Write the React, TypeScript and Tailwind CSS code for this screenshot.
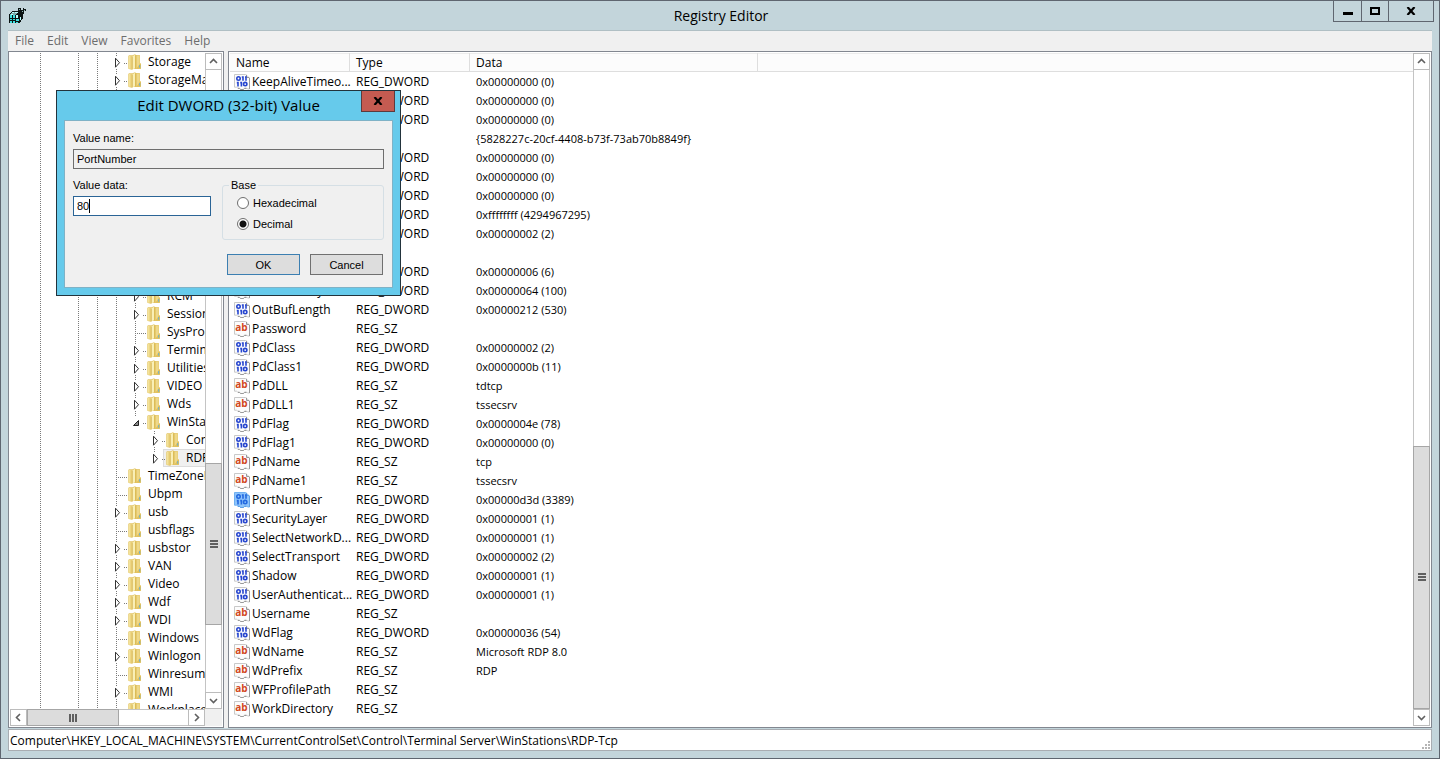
import React from 'react'

interface TreeNode {
  label: string
  depth: number
  state?: 'closed' | 'open'
  last?: boolean
  selected?: boolean
}

interface RegValue {
  name: string
  type: 'REG_DWORD' | 'REG_SZ'
  data: string
  selected?: boolean
}

const treeNodes: TreeNode[] = [
  { label: 'Storage', depth: 0, state: 'closed' },
  { label: 'StorageManagement', depth: 0, state: 'closed' },
  { label: '', depth: 0 },
  { label: '', depth: 0 },
  { label: '', depth: 0 },
  { label: '', depth: 0 },
  { label: '', depth: 0 },
  { label: '', depth: 0 },
  { label: '', depth: 0 },
  { label: '', depth: 0 },
  { label: '', depth: 1 },
  { label: '', depth: 1 },
  { label: '', depth: 1 },
  { label: 'RCM', depth: 1, state: 'closed' },
  { label: 'SessionArbitrationHelper', depth: 1, state: 'closed' },
  { label: 'SysProcs', depth: 1 },
  { label: 'TerminalTypes', depth: 1, state: 'closed' },
  { label: 'Utilities', depth: 1, state: 'closed' },
  { label: 'VIDEO', depth: 1, state: 'closed' },
  { label: 'Wds', depth: 1, state: 'closed' },
  { label: 'WinStations', depth: 1, state: 'open', last: true },
  { label: 'Console', depth: 2, state: 'closed' },
  { label: 'RDP-Tcp', depth: 2, state: 'closed', last: true, selected: true },
  { label: 'TimeZoneInformation', depth: 0 },
  { label: 'Ubpm', depth: 0 },
  { label: 'usb', depth: 0, state: 'closed' },
  { label: 'usbflags', depth: 0 },
  { label: 'usbstor', depth: 0, state: 'closed' },
  { label: 'VAN', depth: 0, state: 'closed' },
  { label: 'Video', depth: 0, state: 'closed' },
  { label: 'Wdf', depth: 0, state: 'closed' },
  { label: 'WDI', depth: 0, state: 'closed' },
  { label: 'Windows', depth: 0 },
  { label: 'Winlogon', depth: 0, state: 'closed' },
  { label: 'Winresume', depth: 0 },
  { label: 'WMI', depth: 0, state: 'closed' },
  { label: 'WorkplaceJoin', depth: 0 },
]

const values: RegValue[] = [
  { name: 'KeepAliveTimeo...', type: 'REG_DWORD', data: '0x00000000 (0)' },
  { name: 'KeyboardLayout', type: 'REG_DWORD', data: '0x00000000 (0)' },
  { name: 'LanAdapter', type: 'REG_DWORD', data: '0x00000000 (0)' },
  { name: 'LoadableProtoc...', type: 'REG_SZ', data: '{5828227c-20cf-4408-b73f-73ab70b8849f}' },
  { name: 'MaxConnection...', type: 'REG_DWORD', data: '0x00000000 (0)' },
  { name: 'MaxDisconnecti...', type: 'REG_DWORD', data: '0x00000000 (0)' },
  { name: 'MaxIdleTime', type: 'REG_DWORD', data: '0x00000000 (0)' },
  { name: 'MaxInstanceCo...', type: 'REG_DWORD', data: '0xffffffff (4294967295)' },
  { name: 'MinEncryptionL...', type: 'REG_DWORD', data: '0x00000002 (2)' },
  { name: 'NWLogonServer', type: 'REG_SZ', data: '' },
  { name: 'OutBufCount', type: 'REG_DWORD', data: '0x00000006 (6)' },
  { name: 'OutBufDelay', type: 'REG_DWORD', data: '0x00000064 (100)' },
  { name: 'OutBufLength', type: 'REG_DWORD', data: '0x00000212 (530)' },
  { name: 'Password', type: 'REG_SZ', data: '' },
  { name: 'PdClass', type: 'REG_DWORD', data: '0x00000002 (2)' },
  { name: 'PdClass1', type: 'REG_DWORD', data: '0x0000000b (11)' },
  { name: 'PdDLL', type: 'REG_SZ', data: 'tdtcp' },
  { name: 'PdDLL1', type: 'REG_SZ', data: 'tssecsrv' },
  { name: 'PdFlag', type: 'REG_DWORD', data: '0x0000004e (78)' },
  { name: 'PdFlag1', type: 'REG_DWORD', data: '0x00000000 (0)' },
  { name: 'PdName', type: 'REG_SZ', data: 'tcp' },
  { name: 'PdName1', type: 'REG_SZ', data: 'tssecsrv' },
  { name: 'PortNumber', type: 'REG_DWORD', data: '0x00000d3d (3389)', selected: true },
  { name: 'SecurityLayer', type: 'REG_DWORD', data: '0x00000001 (1)' },
  { name: 'SelectNetworkD...', type: 'REG_DWORD', data: '0x00000001 (1)' },
  { name: 'SelectTransport', type: 'REG_DWORD', data: '0x00000002 (2)' },
  { name: 'Shadow', type: 'REG_DWORD', data: '0x00000001 (1)' },
  { name: 'UserAuthenticat...', type: 'REG_DWORD', data: '0x00000001 (1)' },
  { name: 'Username', type: 'REG_SZ', data: '' },
  { name: 'WdFlag', type: 'REG_DWORD', data: '0x00000036 (54)' },
  { name: 'WdName', type: 'REG_SZ', data: 'Microsoft RDP 8.0' },
  { name: 'WdPrefix', type: 'REG_SZ', data: 'RDP' },
  { name: 'WFProfilePath', type: 'REG_SZ', data: '' },
  { name: 'WorkDirectory', type: 'REG_SZ', data: '' },
]

const AppIcon = () => (
  <svg width="18" height="18" viewBox="0 0 17 17" shapeRendering="crispEdges">
    <path d="M1 7 4 4h6l1-1 3 2v6l-3 4H1z" fill="#0b1414" />
    <path d="M1 8 4 5h5L7 8z" fill="#7fa9a9" />
    <path d="M2 8h2v2H2zM5 8h2v2H5zM2 11h2v1H2zM5 11h2v1H5zM2 13h2v2H2zM5 13h2v2H5zM8 11h2v2H8zM8 14h1v1H8z" fill="#3fe0e0" />
    <path d="M4 5h2v1H4zM7 5h2v1H7zM3 7h2v1H3zM8 8h1v2H8zM11 9h1v3h-1z" fill="#bff" />
    <path d="M9 1h3v3H9zM12 3h3v3h-3zM14 1h1v2h-1zM15 2h2v2h-2zM13 6h2v1h-2z" fill="#0b1414" />
    <path d="M10 2h1v1h-1zM13 4h1v1h-1zM15 3h1v1h-1z" fill="#8fb5b5" />
  </svg>
)

const FolderIcon = () => (
  <svg width="14" height="16" viewBox="0 0 14 16" className="shrink-0">
    <path d="M.3 2 1 1.3h3.5L7 .3l1 .8h3.6l.4.6V9l1 .8v4.6l-.6.6H5l-1 .7L.8 15l-.5-.6z" fill="#e3c567" />
    <path d="M.8 2h3.4v12.7H.8z" fill="#f3e29a" />
    <path d="M2.4 2h1.8v13H2.4z" fill="#ead078" />
    <path d="M4.2 2.6 7 .8v13.4l-2.8 1.2z" fill="#f9efb6" />
    <path d="M4.3 2.6v12.6" stroke="#cfae4b" strokeWidth=".7" />
    <path d="M7 1.4h1.6v13.2H7z" fill="#dcbc56" />
    <path d="M8.6 1.6h3v9.6l-3 3.2z" fill="#eed88a" />
    <path d="M8.6 14.6 12 9.4l1 .8v4.2z" fill="#e2c15a" />
    <path d="M11.2 11h1v2.8h-1z" fill="#6ab0d4" />
  </svg>
)

const ValueIcon = ({ type, selected }: { type: RegValue['type']; selected?: boolean }) => (
  <svg width="16" height="16" viewBox="0 0 16 16" className="shrink-0">
    <path
      d="M.5.5h11l4 3.5v11h-2l-1-1h-2l-1 1.5h-3l-1-1.5h-2l-1-.8H.5z"
      fill={selected ? '#8ec4fb' : '#fcfcfc'}
      stroke={selected ? '#6fb0f0' : '#c9c9c9'}
    />
    <path d="M12.5.8v2.7h2.8M15.5 4v11M4 14.5h1.5l1 1h3l1-1h2" fill="none" stroke={selected ? '#5e9fe4' : '#9a9a9a'} />
    {type === 'REG_DWORD' ? (
      <g fill="none" stroke={selected ? '#2268e0' : '#2746cf'} strokeWidth="1.6">
        <circle cx="4.5" cy="4.5" r="1.7" />
        <path d="M9 2.2v4.6M12 2.2v4.6M4 7.8v4.6M7.4 7.8v4.6M7.8 3H9M11 3h1M2.8 8.6H4M6.2 8.6h1.2" />
        <circle cx="11.2" cy="10.1" r="1.7" />
      </g>
    ) : (
      <text x="7.5" y="10" textAnchor="middle" fontFamily="Open Sans" fontSize="10" fontWeight="700" fill="#d2481f">
        ab
      </text>
    )}
  </svg>
)

const Chevron = ({ dir }: { dir: 'up' | 'down' | 'left' | 'right' }) => {
  const paths = {
    up: 'M1 6 4.5 2.5 8 6',
    down: 'M1 3l3.5 3.5L8 3',
    left: 'M6 1 2.5 4.5 6 8',
    right: 'M3 1l3.5 3.5L3 8',
  }
  return (
    <svg width="9" height="9" viewBox="0 0 9 9">
      <path d={paths[dir]} fill="none" stroke="#606060" strokeWidth="1.6" />
    </svg>
  )
}

const ScrollButton = ({ dir }: { dir: 'up' | 'down' | 'left' | 'right' }) => (
  <button
    aria-label={`Scroll ${dir}`}
    className="flex h-[17px] w-[17px] shrink-0 items-center justify-center border border-[#bcbcbc] bg-white"
  >
    <Chevron dir={dir} />
  </button>
)

const Grip = ({ vertical }: { vertical?: boolean }) => (
  <svg width="8" height="8" viewBox="0 0 8 8" className="shrink-0" shapeRendering="crispEdges">
    <path d={vertical ? 'M0 0h8v2H0zM0 3h8v2H0zM0 6h8v2H0z' : 'M0 0h2v8H0zM3 0h2v8H3zM6 0h2v8H6z'} fill="#606060" />
  </svg>
)

const TreeRow = ({ node }: { node: TreeNode }) => {
  // a false entry is a level whose branch already ended
  const guides = [true, false, true, true, true, false].slice(0, 4 + node.depth)
  const dotsY = 'bg-[linear-gradient(#7a7a7a_50%,transparent_50%)] bg-[length:1px_2px]'
  const dotsX = 'bg-[linear-gradient(90deg,#7a7a7a_50%,transparent_50%)] bg-[length:2px_1px]'
  return (
    <li className="flex h-[18px] shrink-0">
      {guides.map((on, i) => (
        <span key={i} className="flex w-[19px] shrink-0 justify-center">
          {on && <span className={`w-px ${dotsY}`} />}
        </span>
      ))}
      <span className="relative w-[18px] shrink-0">
        <span className={`absolute left-[9px] top-0 w-px ${node.last ? 'h-[10px]' : 'h-full'} ${dotsY}`} />
        {node.label && <span className={`absolute -right-[3px] left-[9px] top-[10px] h-px ${dotsX}`} />}
        {node.state && (
          <span className="absolute left-[6px] top-[3px] flex h-[13px] w-[11px] items-center bg-white">
            <svg width="8" height="11" viewBox="0 0 8 11">
              {node.state === 'closed' ? (
                <path d="M2.5 1.2v9L6.5 5.7z" fill="#fff" stroke="#333" />
              ) : (
                <path d="M6.5 3.5v5h-5z" fill="#8a8a8a" stroke="#222" />
              )}
            </svg>
          </span>
        )}
      </span>
      <span
        className={`flex grow items-center gap-[6px] whitespace-nowrap pl-[3px] ${
          node.selected ? 'bg-[#f0f0f0] ring-1 ring-inset ring-[#dcdcdc]' : ''
        }`}
      >
        {node.label && <FolderIcon />}
        {node.label}
      </span>
    </li>
  )
}

const KeyTree = () => (
  <div className="flex w-[216px] shrink-0 flex-col border border-[#828790] bg-white p-px">
    <div className="flex min-h-0 grow basis-0">
      <ul className="flex min-w-0 grow basis-0 flex-col overflow-hidden pl-[21px]">
        {treeNodes.map((node, i) => (
          <TreeRow key={i} node={node} />
        ))}
      </ul>
      <div className="flex w-[17px] shrink-0 flex-col border-x border-[#c4c4c4] bg-white">
        <div className="-mx-px flex grow flex-col">
          <ScrollButton dir="up" />
          <div className="grow-[394] basis-0" />
          <div className="flex grow-[161] basis-0 items-center justify-center border border-[#a6a6a6] bg-[#dcdcdc]">
            <Grip vertical />
          </div>
          <div className="grow-[67] basis-0" />
          <ScrollButton dir="down" />
        </div>
      </div>
    </div>
    <div className="flex h-[17px] shrink-0 bg-[#f0f0f0] pr-[17px]">
      <div className="flex grow border-y border-[#c4c4c4] bg-white">
        <div className="-my-px flex grow">
          <ScrollButton dir="left" />
          <div className="flex grow-[91] basis-0 items-center justify-center border border-[#a6a6a6] bg-[#dcdcdc]">
            <Grip />
          </div>
          <div className="grow-[70] basis-0" />
          <ScrollButton dir="right" />
        </div>
      </div>
    </div>
  </div>
)

const ValueList = () => (
  <div className="flex min-w-0 grow border border-[#828790] bg-white p-px">
    <div className="min-w-0 grow basis-0 overflow-hidden">
      <table className="w-full table-fixed border-separate border-spacing-0 text-left">
        <colgroup>
          <col className="w-[120px]" />
          <col className="w-[120px]" />
          <col className="w-[288px]" />
          <col />
        </colgroup>
        <thead>
          <tr className="h-[19px] bg-[#fcfcfc] shadow-[inset_0_-1px_#dedede,inset_0_1px_#ececec]">
            {['Name', 'Type', 'Data'].map((title) => (
              <th key={title} className="border-r border-[#dedede] p-0 pl-[6px] font-normal leading-[18px]">
                {title}
              </th>
            ))}
            <td className="p-0" />
          </tr>
        </thead>
        <tbody>
          {values.map((value) => (
            <tr key={value.name} className="h-[19px] whitespace-nowrap">
              <td className="p-0 pl-[4px] leading-[18px]">
                <span className="flex items-center gap-[2px]">
                  <ValueIcon type={value.type} selected={value.selected} />
                  {value.name}
                </span>
              </td>
              <td className="p-0 pl-[6px] leading-[18px]">{value.type}</td>
              <td className="p-0 pl-[6px] text-[11px] leading-[18px]">{value.data}</td>
              <td className="p-0" />
            </tr>
          ))}
        </tbody>
      </table>
    </div>
    <div className="flex w-[17px] shrink-0 flex-col border-x border-[#c4c4c4] bg-white">
      <div className="-mx-px flex grow flex-col">
        <ScrollButton dir="up" />
        <div className="grow-[377] basis-0" />
        <div className="flex grow-[262] basis-0 items-center justify-center border border-[#a6a6a6] bg-[#dcdcdc]">
          <Grip vertical />
        </div>
        <ScrollButton dir="down" />
      </div>
    </div>
  </div>
)

const CloseGlyph = () => (
  <svg width="10" height="8" viewBox="0 0 10 8">
    <path d="M1.5 0 8.5 8M8.5 0 1.5 8" stroke="#000" strokeWidth="2.2" />
  </svg>
)

const EditDialog = () => (
  <div
    role="dialog"
    aria-labelledby="dialog-title"
    className="absolute left-[55px] top-[89px] w-[345px] border border-[#22333c] bg-[#66caeb] px-[7px] pb-[7px] font-['Liberation_Sans',sans-serif] text-[11px] leading-[14px]"
  >
    <div className="relative flex h-[29px] justify-center">
      <h2 id="dialog-title" className="font-['Open_Sans',sans-serif] text-[15px] leading-[28px]">
        Edit DWORD (32-bit) Value
      </h2>
      <button
        aria-label="Close"
        className="absolute -right-[2px] top-0 flex h-[21px] w-[34px] items-center justify-center border border-t-0 border-[#5d3a3c] bg-[#c45b51]"
      >
        <CloseGlyph />
      </button>
    </div>
    <form className="border border-[#7fb2c6] bg-[#f0f0f0] px-[8px] pb-[12px] pt-[10px]" onSubmit={(e) => e.preventDefault()}>
      <label htmlFor="value-name" className="block">
        Value name:
      </label>
      <input
        id="value-name"
        readOnly
        value="PortNumber"
        className="mt-[4px] block h-[20px] w-full border border-[#6e6e6e] bg-[#f0f0f0] px-[3px] outline-none"
      />
      <div className="mt-[9px] flex justify-between">
        <div className="w-[138px]">
          <label htmlFor="value-data" className="block">
            Value data:
          </label>
          <div className="relative mt-[4px]">
            <input
              id="value-data"
              defaultValue="80"
              className="block h-[20px] w-full border border-[#2a6496] bg-white px-[3px] outline-none"
            />
            <span className="absolute left-[16px] top-[3px] h-[14px] w-px bg-black" />
          </div>
        </div>
        <fieldset className="h-[62px] w-[162px] rounded-[3px] border border-[#d5dfe5] pl-[14px]">
          <legend className="-ml-[8px] px-[2px]">Base</legend>
          <label className="mt-[4px] flex items-center gap-[4px]">
            <input
              type="radio"
              name="base"
              className="h-[12px] w-[12px] appearance-none rounded-full border border-[#6e6e6e] bg-white"
            />
            Hexadecimal
          </label>
          <label className="mt-[7px] flex items-center gap-[4px]">
            <input
              type="radio"
              name="base"
              defaultChecked
              className="h-[12px] w-[12px] appearance-none rounded-full border border-[#6e6e6e] bg-white bg-[radial-gradient(circle,#111_0_3px,transparent_4px)]"
            />
            Decimal
          </label>
        </fieldset>
      </div>
      <div className="mt-[14px] flex justify-end gap-[10px] pr-px">
        <button type="submit" className="h-[21px] w-[73px] border border-[#3c7fb1] bg-[#dddddd]">
          OK
        </button>
        <button type="button" className="h-[21px] w-[73px] border border-[#707070] bg-[#dddddd]">
          Cancel
        </button>
      </div>
    </form>
  </div>
)

const TitleBar = () => (
  <header className="flex h-[29px] shrink-0 items-start">
    <div className="flex h-full flex-1 items-center">
      <AppIcon />
    </div>
    <h1 className="text-[14px] leading-[30px]">Registry Editor</h1>
    <div className="-mr-[2px] flex h-[21px] flex-1 justify-end">
      <button aria-label="Minimize" className="flex w-[29px] items-center justify-center border border-t-0 border-[#5f6670]">
        <span className="mt-[5px] h-[3px] w-[10px] bg-black" />
      </button>
      <button aria-label="Maximize" className="flex w-[26px] items-center justify-center border-b border-[#5f6670]">
        <span className="h-[8px] w-[10px] border-2 border-black" />
      </button>
      <button aria-label="Close" className="flex w-[46px] items-center justify-center border border-t-0 border-[#5f6670]">
        <CloseGlyph />
      </button>
    </div>
  </header>
)

const App: React.FC = () => {
  return (
    <div className="relative flex h-screen flex-col overflow-hidden border border-[#5f6670] bg-[#c3d5db] px-[7px] pb-[7px] font-['Open_Sans',sans-serif] text-[12px] leading-[18px] text-black">
      <TitleBar />
      <nav className="flex h-[21px] shrink-0 items-center gap-[13px] border-t border-[#b0bfc4] bg-[#f0f0f0] pl-[7px] text-[#6d6d6d]">
        {['File', 'Edit', 'View', 'Favorites', 'Help'].map((item) => (
          <button key={item}>{item}</button>
        ))}
      </nav>

      {/* Tree and values */}
      <main className="flex min-h-0 grow gap-[4px] bg-[#f0f0f0]">
        <KeyTree />
        <ValueList />
      </main>

      <footer className="mt-px flex h-[22px] shrink-0 items-end justify-between border border-[#a9adb2] bg-white pl-px">
        <span>Computer\HKEY_LOCAL_MACHINE\SYSTEM\CurrentControlSet\Control\Terminal Server\WinStations\RDP-Tcp</span>
        <svg width="9" height="9" viewBox="0 0 9 9" shapeRendering="crispEdges">
          <path d="M6 0h2v2H6zM3 3h2v2H3zM6 3h2v2H6zM0 6h2v2H0zM3 6h2v2H3zM6 6h2v2H6z" fill="#b5b5b5" />
        </svg>
      </footer>

      <EditDialog />
    </div>
  )
}

export default App
